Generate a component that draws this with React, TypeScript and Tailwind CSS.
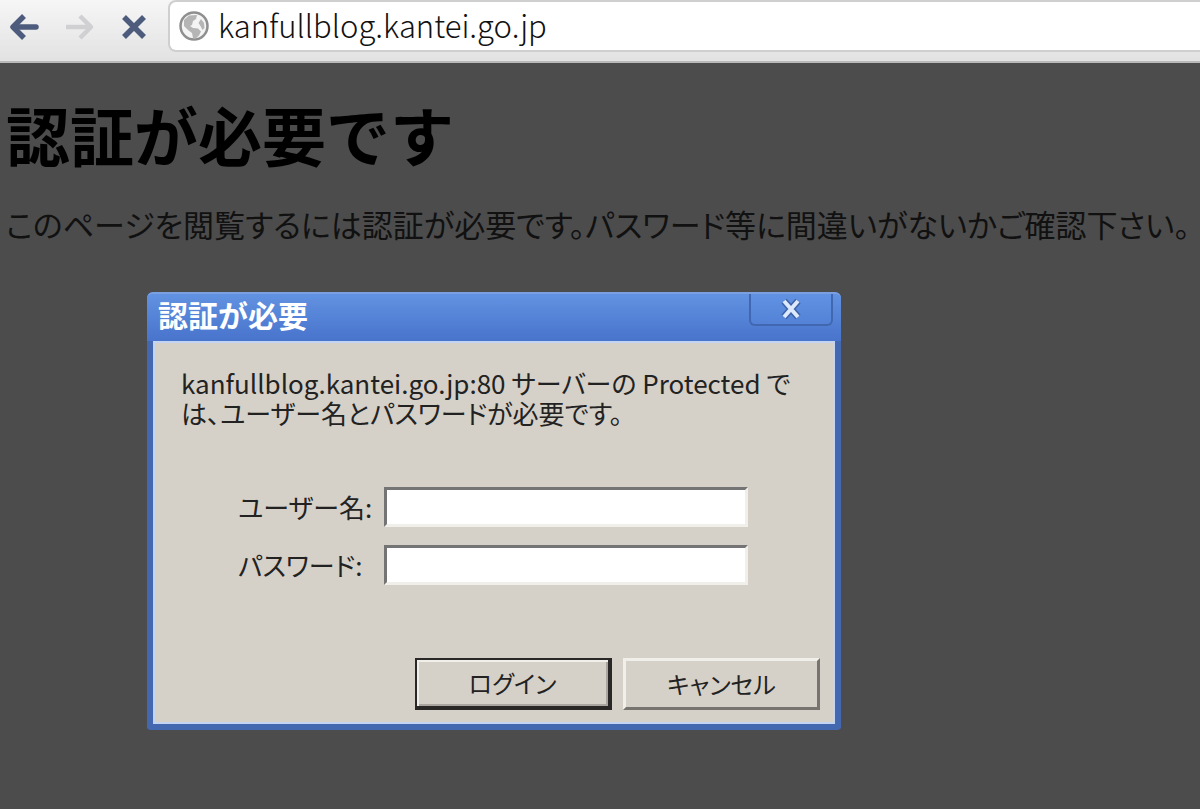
import { useState } from "react";

const FONT = "font-['Noto_Sans_CJK_JP',sans-serif]";

function BackIcon() {
  return (
    <svg viewBox="0 0 30 28" className="h-7 w-[30px]" fill="none" stroke="#4d5b7c" strokeWidth="5.5" strokeLinejoin="round">
      <path d="M14 3 3 14l11 11" />
      <path d="M4 14h22" strokeLinecap="round" />
    </svg>
  );
}

function ForwardIcon() {
  return (
    <svg viewBox="0 0 30 28" className="h-7 w-[30px]" fill="none" stroke="#d0d0d3" strokeWidth="4.5" strokeLinejoin="round">
      <path d="m15 3 11 11-11 11" />
      <path d="M1 14h24" />
    </svg>
  );
}

function StopIcon() {
  return (
    <svg viewBox="0 0 26 26" className="h-[26px] w-[26px]" fill="none" stroke="#4d5b7c" strokeWidth="5.5">
      <path d="m3 3 20 20M23 3 3 23" />
    </svg>
  );
}

function GlobeIcon() {
  return (
    <svg viewBox="0 0 32 32" className="h-8 w-8 shrink-0">
      <circle cx="16" cy="16" r="13.5" fill="#f4f4f4" stroke="#8f8f8f" strokeWidth="2.5" />
      <path d="M6 10 11 5.500l8-.5-1 4-3 2-1 4-2 1 3 2 5 .5 3 3-2 4-4 3.500-2-1-1-5-4-3-4-4Z" fill="#b5b5b5" />
      <path d="m23 9 3 4 .5 5-2 2-2-4-2-3Z" fill="#b5b5b5" />
    </svg>
  );
}

function Toolbar() {
  return (
    <header className="flex h-[63px] items-start border-b-2 border-[#b9b9b9] bg-linear-to-b from-[#f6f6f6] to-[#e2e2e2] pl-[10px]">
      <nav className="flex h-[53px] shrink-0 items-center">
        <button type="button" aria-label="戻る">
          <BackIcon />
        </button>
        <button type="button" aria-label="進む" className="ml-[25px]">
          <ForwardIcon />
        </button>
        <button type="button" aria-label="中止" className="ml-[26px]">
          <StopIcon />
        </button>
      </nav>
      <div className="ml-[21px] flex h-[52px] grow items-center rounded-l-lg border-2 border-r-0 border-[#cfcfcf] bg-white pl-2">
        <GlobeIcon />
        <input
          type="text"
          aria-label="アドレス"
          defaultValue="kanfullblog.kantei.go.jp"
          className="ml-2 h-10 min-w-0 grow bg-transparent pb-1 text-[31px] leading-9 font-light text-[#111] outline-none"
        />
      </div>
    </header>
  );
}

function AuthDialog() {
  const [user, setUser] = useState("");
  const [password, setPassword] = useState("");

  const field =
    "h-10 w-[364px] border-[3px] border-t-[#747474] border-l-[#747474] border-r-[#f1efea] border-b-[#f1efea] bg-white px-2 text-2xl outline-none";

  return (
    <section
      role="dialog"
      aria-labelledby="dialog-title"
      className="mt-[48px] ml-[147px] w-[694px] max-w-full rounded-t-md rounded-b border-x-[6px] border-b-[6px] border-[#4468b0] bg-[#4468b0]"
    >
      <div className="-mx-[6px] flex h-[49px] items-start justify-between rounded-t-md border-t-2 border-[#7ba0e2] bg-linear-to-b from-[#6292e2] to-[#4874cb] pr-2 pl-[11px]">
        <h2 id="dialog-title" className="text-[30px] leading-10 font-bold text-white">
          認証が必要
        </h2>
        <button
          type="button"
          aria-label="閉じる"
          className="flex h-8 w-[84px] items-center justify-center rounded-b-md border-2 border-t-0 border-[#4067b0] bg-linear-to-b from-[#6292e2] to-[#5382d6]"
        >
          <svg viewBox="0 0 24 24" className="h-6 w-6" fill="none">
            <path d="m5 4 14 16M19 4 5 20" stroke="#3e62a6" strokeWidth="7" />
            <path d="m5 4 14 16M19 4 5 20" stroke="#dce9ff" strokeWidth="4" />
          </svg>
        </button>
      </div>

      <form
        onSubmit={(e) => e.preventDefault()}
        className="border-2 border-[#c3d3f2] bg-[#d5d0c8] px-[13px] pt-[25px] pb-3 text-[26px] text-[#222]"
      >
        <p className="pl-[13px] leading-[30px] [font-feature-settings:'palt']">
          kanfullblog.kantei.go.jp:80 サーバーの Protected で
          <br />
          は、ユーザー名とパスワードが必要です。
        </p>

        <div className="mt-[59px] ml-[70px] flex flex-col gap-[18px]">
          <div className="flex items-center">
            <label htmlFor="user" className="w-[146px] shrink-0 leading-10 [font-feature-settings:'palt']">
              ユーザー名:
            </label>
            <input id="user" type="text" value={user} onChange={(e) => setUser(e.target.value)} className={field} />
          </div>
          <div className="flex items-center">
            <label htmlFor="password" className="w-[146px] shrink-0 leading-10 [font-feature-settings:'palt']">
              パスワード:
            </label>
            <input
              id="password"
              type="password"
              value={password}
              onChange={(e) => setPassword(e.target.value)}
              className={field}
            />
          </div>
        </div>

        <div className="mt-[73px] flex justify-end gap-[11px] text-2xl [font-feature-settings:'palt']">
          <button
            type="submit"
            className="h-[52px] w-[197px] border-2 border-r-4 border-b-4 border-[#2a2826] shadow-[inset_2px_2px_0_#f1efea,inset_-2px_-2px_0_#aaa69f]"
          >
            ログイン
          </button>
          <button
            type="button"
            className="h-[52px] w-[197px] border-[3px] border-t-[#f1efea] border-l-[#f1efea] border-r-[#777470] border-b-[#777470]"
          >
            キャンセル
          </button>
        </div>
      </form>
    </section>
  );
}

export default function App() {
  return (
    <div className={`min-h-screen overflow-hidden bg-[#4c4c4c] ${FONT}`}>
      <Toolbar />
      <main>
        <h1 className="mt-[37px] pl-[6px] text-[64px] leading-[66px] font-bold text-black">認証が必要です</h1>
        <p className="mt-[38px] pl-[6px] text-[31px] leading-10 whitespace-nowrap text-[#111] [font-feature-settings:'palt']">
          このページを閲覧するには認証が必要です。パスワード等に間違いがないかご確認下さい。
        </p>
        <AuthDialog />
      </main>
    </div>
  );
}
